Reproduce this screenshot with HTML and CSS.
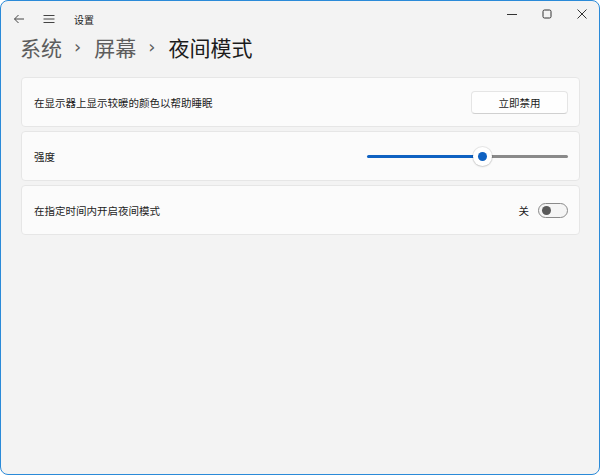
FILE: index.html
```html
<!DOCTYPE html>
<html lang="zh-CN">
<head>
<meta charset="utf-8">
<link rel="stylesheet" href="styles.css">
</head>
<body>
<div class="window">
  <div class="titlebar">
    <div class="nav">
      <svg class="ico back" width="12" height="12" viewBox="0 0 12 12"><path d="M11 6H1.5M5.5 2L1.5 6l4 4" fill="none" stroke="#444" stroke-width="1"/></svg>
      <svg class="ico menu" width="12" height="10" viewBox="0 0 12 10"><path d="M0.5 1.5h11M0.5 5h11M0.5 8.5h11" fill="none" stroke="#444" stroke-width="1"/></svg>
      <span class="apptitle">设置</span>
    </div>
    <div class="controls">
      <svg width="10" height="10" viewBox="0 0 10 10"><path d="M0 5.5h10" stroke="#333" stroke-width="1"/></svg>
      <svg width="10" height="10" viewBox="0 0 10 10"><rect x="1" y="1" width="8" height="8" rx="1.5" fill="none" stroke="#333" stroke-width="1"/></svg>
      <svg width="10" height="10" viewBox="0 0 10 10"><path d="M0.5 0.5l9 9M9.5 0.5l-9 9" stroke="#333" stroke-width="1"/></svg>
    </div>
  </div>
  <div class="breadcrumb">
    <span class="crumb">系统</span><span class="sep">›</span><span class="crumb">屏幕</span><span class="sep">›</span><span class="crumb current">夜间模式</span>
  </div>
  <div class="cards">
    <div class="card">
      <span class="label">在显示器上显示较暖的颜色以帮助睡眠</span>
      <button class="btn">立即禁用</button>
    </div>
    <div class="card">
      <span class="label">强度</span>
      <div class="slider">
        <div class="fill" style="width:55%"></div>
        <div class="thumb"><div class="dot"></div></div>
        <div class="rest"></div>
      </div>
    </div>
    <div class="card">
      <span class="label">在指定时间内开启夜间模式</span>
      <div class="toggle-wrap">
        <span class="state">关</span>
        <div class="toggle"><div class="knob"></div></div>
      </div>
    </div>
  </div>
</div>
</body>
</html>
```

FILE: styles.css
```css
* { box-sizing: border-box; }
html, body { margin: 0; padding: 0; }
body {
  font-family: "Noto Sans CJK SC", "Noto Sans", sans-serif;
  background: #ffffff;
}
.window {
  width: 600px;
  height: 475px;
  border: 1px solid #2a8ad8;
  border-radius: 8px;
  background: #f3f3f3;
  overflow: hidden;
}
.titlebar {
  height: 32px;
  display: flex;
  justify-content: space-between;
  align-items: flex-start;
}
.nav {
  display: flex;
  align-items: center;
  height: 36px;
  padding-left: 12px;
}
.ico { display: block; }
.back { margin-right: 18px; }
.menu { margin-right: 19px; }
.apptitle {
  font-size: 10px;
  color: #1b1b1b;
}
.controls {
  display: flex;
  align-items: center;
  gap: 25px;
  height: 25px;
  padding-right: 12px;
}
.controls svg { display: block; }
.breadcrumb {
  display: flex;
  align-items: center;
  padding-left: 19px;
  margin-top: -2px;
  height: 32px;
  font-size: 21px;
  line-height: 32px;
}
.crumb { color: #5d5d5d; }
.crumb.current { color: #1b1b1b; }
.sep {
  color: #5d5d5d;
  font-size: 18px;
  margin: 0 13px 0 12px;
  font-family: "DejaVu Sans", sans-serif;
}
.cards {
  display: flex;
  flex-direction: column;
  gap: 4px;
  padding: 14px 19px 0 20px;
}
.card {
  height: 50px;
  background: #fbfbfb;
  border: 1px solid #e6e6e6;
  border-radius: 4px;
  display: flex;
  align-items: center;
  justify-content: space-between;
  padding: 0 11px 0 12px;
}
.label {
  font-size: 10.5px;
  color: #1b1b1b;
}
.btn {
  width: 97px;
  height: 23px;
  background: #fefefe;
  border: 1px solid #e5e5e5;
  border-bottom-color: #d0d0d0;
  border-radius: 4px;
  font-family: inherit;
  font-size: 10.5px;
  color: #1b1b1b;
  padding: 0;
}
.slider {
  width: 201px;
  height: 20px;
  display: flex;
  align-items: center;
}
.fill {
  height: 3px;
  background: #0f62c2;
  border-radius: 2px;
}
.thumb {
  width: 19px;
  height: 19px;
  border-radius: 50%;
  background: #ffffff;
  box-shadow: 0 0 0 1px rgba(0,0,0,0.08), 0 1px 2px rgba(0,0,0,0.12);
  display: flex;
  align-items: center;
  justify-content: center;
  margin: 0 -4px 0 -5px;
  position: relative;
  z-index: 1;
}
.dot {
  width: 9px;
  height: 9px;
  border-radius: 50%;
  background: #0f62c2;
}
.rest {
  flex: 1;
  height: 3px;
  background: #8a8a8a;
  border-radius: 2px;
}
.toggle-wrap {
  display: flex;
  align-items: center;
  gap: 9px;
}
.state {
  font-size: 10.5px;
  color: #1b1b1b;
}
.toggle {
  width: 30px;
  height: 15px;
  border: 1px solid #8a8a8a;
  border-radius: 8px;
  background: #f5f5f5;
  display: flex;
  align-items: center;
  padding-left: 3px;
}
.knob {
  width: 9px;
  height: 9px;
  border-radius: 50%;
  background: #5a5a5a;
}
```
